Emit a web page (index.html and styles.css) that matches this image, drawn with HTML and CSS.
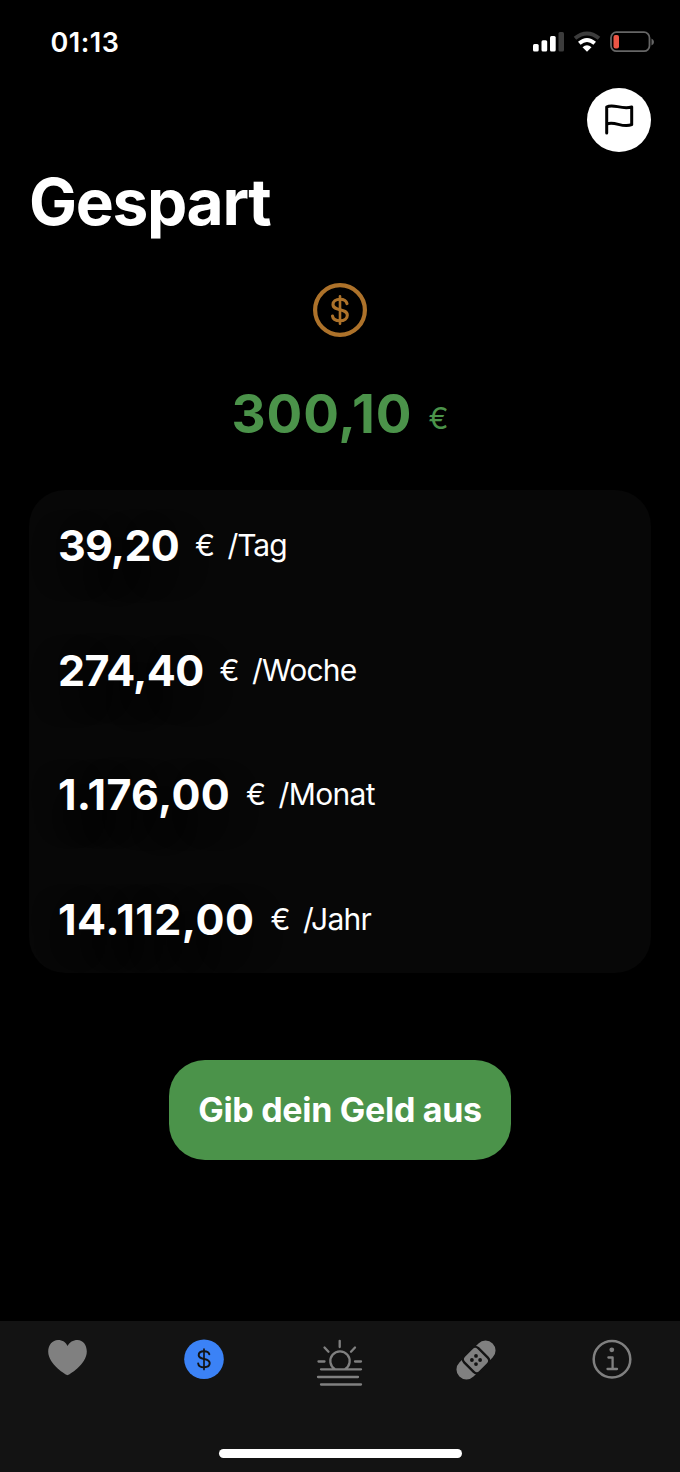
FILE: index.html
```html
<!DOCTYPE html>
<html lang="de">
<head>
<meta charset="utf-8">
<title>Gespart</title>
<link rel="stylesheet" href="styles.css">
</head>
<body>
<div class="screen">
  <header class="status">
    <span class="time">01:13</span>
    <svg class="status-icons" width="124" height="24" viewBox="0 0 124 24">
      <g fill="#fff">
        <rect x="3" y="14" width="5.700" height="7.500" rx="1.500"/>
        <rect x="11.500" y="10.300" width="5.700" height="11.200" rx="1.500"/>
        <rect x="20" y="6" width="5.700" height="15.500" rx="1.500"/>
        <rect x="28.500" y="2" width="5.500" height="19.500" rx="1.500" fill="#3c3c3c"/>
      </g>
      <g fill="none" stroke-width="4">
        <path d="M45 8.300Q57 -1.200 69 8.300" stroke="#3c3c3c"/>
        <path d="M49.300 13.200Q57 6.700 64.700 13.200" stroke="#fff"/>
      </g>
      <path d="M52.500 17.300Q57 13.300 61.500 17.300L57 21.800Z" fill="#fff"/>
      <rect x="81" y="2.200" width="38.500" height="19" rx="5.500" fill="none" stroke="#666" stroke-width="1.800"/>
      <rect x="83.500" y="5" width="5.500" height="13.600" rx="2" fill="#ec5545"/>
      <path d="M121.500 8.500Q124 9.500 124 12T121.500 15.500Z" fill="#666"/>
    </svg>
  </header>
  <div class="toolbar">
    <button class="flag" aria-label="Ziele">
      <svg width="64" height="64" viewBox="0 0 64 64" fill="none" stroke="#000" stroke-width="3" stroke-linecap="round" stroke-linejoin="round">
        <path d="M19.700 45V19C26 15 34 22 44.700 19V36.700C35 40.500 28 32.500 19.700 36"/>
      </svg>
    </button>
  </div>
  <h1 class="title">Gespart</h1>
  <main class="content">
    <svg class="coin" width="54" height="54" viewBox="0 0 54 54" fill="none" stroke="#ad722a" stroke-linecap="round">
      <circle cx="27" cy="27" r="24.900" stroke-width="4.200"/>
      <path d="M34 20.600C33.300 17.600 30.500 16.200 27 16.200C22.800 16.200 20 18.500 20 21.500C20 28.700 34.300 24.700 34.300 32.200C34.300 35.600 31.400 37.800 27 37.800C22.800 37.800 19.900 36 19.500 33" stroke-width="3.100"/>
      <path d="M27 13.400V40.800" stroke-width="2.600"/>
    </svg>
    <div class="total"><span class="total-value">300,10</span><span class="total-unit">€</span></div>
    <section class="card">
      <div class="row"><b class="amount a1">39,20</b><span class="euro">€</span><span class="per p1">/Tag</span></div>
      <div class="row"><b class="amount a2">274,40</b><span class="euro">€</span><span class="per p2">/Woche</span></div>
      <div class="row"><b class="amount a3">1.176,00</b><span class="euro">€</span><span class="per p3">/Monat</span></div>
      <div class="row"><b class="amount a4">14.112,00</b><span class="euro">€</span><span class="per p4">/Jahr</span></div>
    </section>
    <button class="spend">Gib dein Geld aus</button>
  </main>
  <footer class="dock">
    <nav class="tabs">
      <svg class="tab" width="56" height="56" viewBox="0 0 56 56"><path d="M27.500 44.200C26.500 44.200 8.200 33.500 8.200 20.500C8.200 14 12.500 9 18 9C22.500 9 26 11.300 27.500 15C29.500 11.300 33 9 37.500 9C43 9 46.800 14 46.800 20.500C46.800 33.500 28.500 44.200 27.500 44.200Z" fill="#808080"/></svg>
      <svg class="tab" width="56" height="56" viewBox="0 0 56 56" fill="none" stroke="#131313" stroke-linecap="round">
        <circle cx="28" cy="28.200" r="19.800" fill="#3b82f6" stroke="none"/>
        <path d="M33.300 23.300C32.800 21.200 30.700 20.200 28 20.200C24.800 20.200 22.700 21.900 22.700 24.200C22.700 29.500 33.700 26.500 33.700 32.100C33.700 34.700 31.300 36.300 28 36.300C24.800 36.300 22.500 35 22.200 32.500" stroke-width="2"/>
        <path d="M28 18.100V38.500" stroke-width="1.700"/>
      </svg>
      <svg class="tab" width="56" height="56" viewBox="0 0 56 56" fill="none" stroke="#808080" stroke-width="2.300" stroke-linecap="round">
        <path d="M23 38.300A9.700 9.700 0 1 1 33 38.300M9 38.300H49M6 46H46M9 53.500H49M27.700 9.800V16M12.500 16.500L16.500 20.700M43 16.500L39 20.700M6.500 30.500H12.500M43 30.500H49"/>
      </svg>
      <svg class="tab" width="56" height="56" viewBox="0 0 56 56">
        <g transform="rotate(-45 28 29)">
          <rect x="4.500" y="19" width="47" height="20" rx="10" fill="#808080"/>
          <rect x="18" y="17.800" width="20" height="22.400" rx="4.500" fill="#808080" stroke="#131313" stroke-width="2.400"/>
        </g>
        <g fill="#131313"><circle cx="28" cy="24.900" r="1.900"/><circle cx="28" cy="33.100" r="1.900"/><circle cx="23.900" cy="29" r="1.900"/><circle cx="32.100" cy="29" r="1.900"/></g>
      </svg>
      <svg class="tab" width="56" height="56" viewBox="0 0 56 56" fill="none" stroke="#808080" stroke-linecap="round" stroke-linejoin="round">
        <circle cx="28" cy="28.200" r="18.300" stroke-width="2.500"/>
        <path d="M24.400 26.500H28.600V38M23.500 38H33" stroke-width="2.300"/>
        <circle cx="27.800" cy="18.800" r="2.400" fill="#808080" stroke="none"/>
      </svg>
    </nav>
    <div class="home"></div>
  </footer>
</div>
</body>
</html>
```
FILE: styles.css
```css
* { box-sizing: border-box; }
body { margin: 0; background: #000; color: #fff; font-family: Inter, "Liberation Sans", sans-serif; }
button { border: 0; padding: 0; font-family: inherit; }
svg { display: block; }
.screen { width: 680px; height: 1472px; display: flex; flex-direction: column; overflow: hidden; }
.status { height: 88px; padding: 26px 26px 0 50.500px; display: flex; justify-content: space-between; align-items: flex-start; }
.time { margin-top: 1px; font-size: 27px; line-height: 32px; font-weight: 600; letter-spacing: 0.5px; }
.status-icons { margin-top: 4px; }
.toolbar { height: 64px; padding-right: 29px; display: flex; justify-content: flex-end; }
.flag { width: 64px; height: 64px; border-radius: 50%; background: #fff; }
.title { margin: 11px 0 0 29px; font-size: 64px; line-height: 78px; font-weight: 700; letter-spacing: -1.35px; }
.content { display: flex; flex-direction: column; align-items: center; padding: 42px 29px 0; }
.total { display: flex; align-items: center; justify-content: center; gap: 16px; margin-top: 44px; height: 66px; line-height: 66px; color: #4b934a; }
.total-value { font-size: 53px; font-weight: 700; letter-spacing: 0.9px; }
.total-unit { margin-top: 8px; font-size: 30px; }
.card { width: 622px; height: 483px; margin-top: 43px; padding: 29px 29px 0; display: flex; flex-direction: column; gap: 72.600px; border-radius: 36px; background: #070707; }
.row { height: 52px; display: flex; align-items: center; line-height: 52px; white-space: nowrap; }
.amount { font-size: 43px; font-weight: 700; text-shadow: 0 10px 28px rgba(0, 0, 0, 0.6); }
.a1 { letter-spacing: -0.8px; }
.a2 { letter-spacing: -0.7px; }
.a3 { letter-spacing: 0.3px; }
.a4 { letter-spacing: 0.5px; }
.euro { margin-left: 16px; font-size: 30px; }
.per { margin-left: 12.500px; font-size: 30px; }
.p1 { letter-spacing: -1px; }
.p2 { letter-spacing: -0.8px; }
.p3 { letter-spacing: -0.65px; }
.p4 { letter-spacing: -0.75px; }
.spend { width: 342px; height: 100px; margin-top: 87px; border-radius: 36px; background: #4b934a; color: #fff; font-size: 34px; line-height: 40px; font-weight: 700; letter-spacing: -0.3px; }
.dock { height: 151px; margin-top: auto; background: #131313; display: flex; flex-direction: column; align-items: center; }
.tabs { width: 680px; height: 127px; padding: 10px 0 0; display: grid; grid-template-columns: repeat(5, 136px); justify-items: center; align-items: start; }
.home { width: 243px; height: 9px; margin-top: 1px; border-radius: 5px; background: #fff; }
```
